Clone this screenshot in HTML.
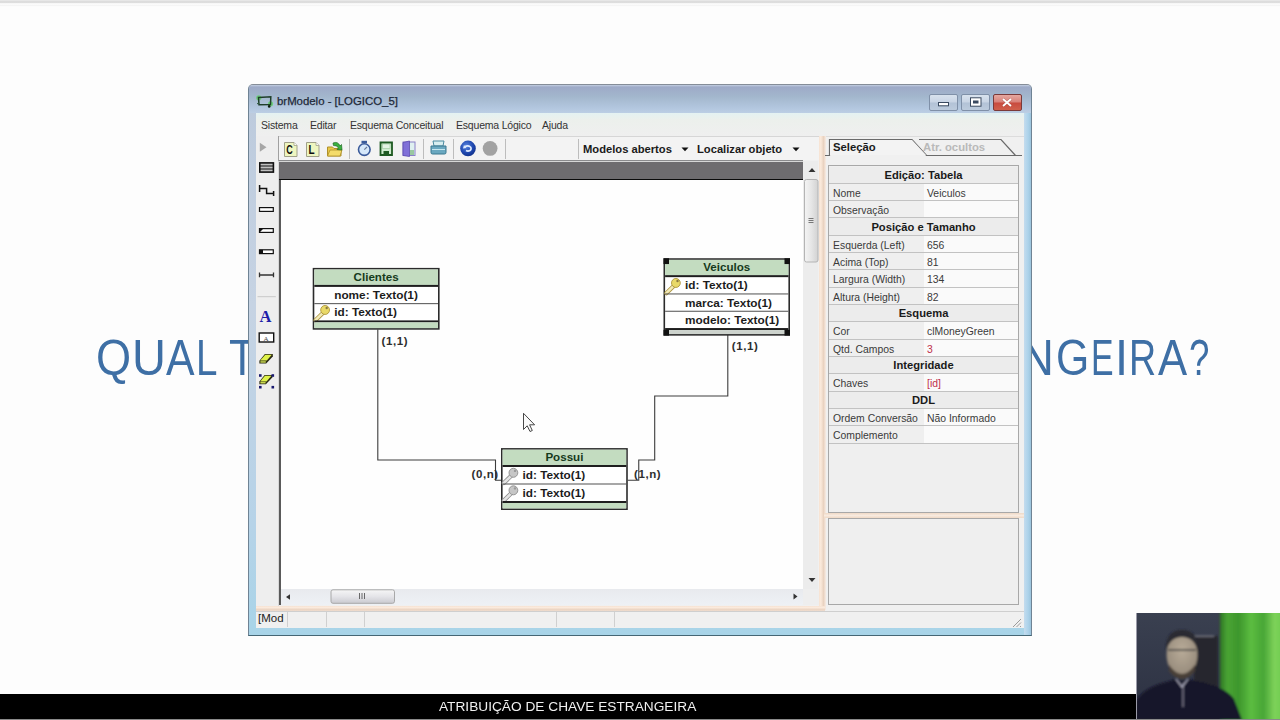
<!DOCTYPE html>
<html><head><meta charset="utf-8">
<style>
*{margin:0;padding:0;box-sizing:border-box}
html,body{width:1280px;height:720px;overflow:hidden;background:#fdfdfd;font-family:"Liberation Sans",sans-serif}
.a{position:absolute}
.nw{white-space:nowrap}
#topline{left:0;top:0;width:1280px;height:8px;background:linear-gradient(#ececec 0px,#d6d6d6 2.2px,#fefefe 3.8px,#f5f5f5 5.5px,#fefefe 6.8px,#fcfcfc 8px)}
.sl{position:absolute;color:#3e6fa5;font-size:50px;top:328.6px;white-space:nowrap;transform-origin:0 0}
#bar{left:0;top:694px;width:1280px;height:25px;background:#000}
#bar2{left:0;top:719px;width:1280px;height:1px;background:#8a8a8a}
#cap{left:439px;top:699px;color:#f0f0f0;font-size:13.7px;white-space:nowrap}
#cam{left:1136px;top:613px;width:144px;height:107px;background:#2a3040;overflow:hidden}
/* window */
#win{left:248px;top:84px;width:784px;height:552px;border:1px solid #6f8394;border-top-color:#858d98;border-bottom-color:#456674;border-radius:5px 5px 0 0;background:linear-gradient(#bccadc,#c6d3e3 40%,#b6d3e8 80%,#a8d4e8)}
#title{left:249px;top:85px;width:782px;height:28px;border-radius:4px 4px 0 0;background:linear-gradient(#c4d0e2 0px,#9eaac8 2px,#a2b6cc 40%,#b4c8e0 85%,#bccee4)}
#ttext{left:277px;top:95px;font-size:11.4px;color:#1d2838;-webkit-text-stroke:0.25px #1d2838;white-space:nowrap}
.wb{top:94px;width:29px;height:17px;border:1px solid #7f90a8;border-radius:2px;background:linear-gradient(#d8e2ee,#c8d4e4 48%,#b2c2d6 52%,#bccbdd)}
#client{left:256px;top:113px;width:768px;height:515px;background:#f0f0f0}
#menu{left:256px;top:113px;width:768px;height:23px;background:linear-gradient(#e4f2f2,#ecf0ec 30%,#efefef)}
.mi{position:absolute;top:119px;font-size:10.5px;letter-spacing:-0.2px;color:#333;white-space:nowrap}
#tb{left:279px;top:136px;width:541px;height:24px;background:#f3f3f3;border-top:1px solid #d6d6d6}
.sep{position:absolute;width:1px;height:20px;top:139px;background:#bdbdbd}
#strip{left:256px;top:136px;width:23px;height:470px;background:#eeeeee;border-right:1px solid #d8d8d8}
#band{left:279px;top:162px;width:524px;height:18px;background:#6e6c6f;border-bottom:1.2px solid #0a0a0a;box-shadow:0 -1px 0 #d6d6d6,0 -2px 0 #8a8a8c}
#canvas{left:279px;top:180px;width:525px;height:409px;background:#fefefe;border-left:2px solid #5a5a5a}
#vs{left:803px;top:161px;width:15px;height:428px;background:#ececec}
#hs{left:279px;top:589px;width:525px;height:16px;background:linear-gradient(#e8eaee,#eef1f5)}
#corner{left:803px;top:589px;width:16px;height:16px;background:#eeeeee}
#spv{left:819px;top:136px;width:6.5px;height:474px;background:linear-gradient(90deg,#f6e2d2,#fbeadc 25%,#e9d2c0 65%,#f8ece4)}
#sph{left:256px;top:605.5px;width:569px;height:6px;background:linear-gradient(#f6e2d2,#fbeadc 25%,#e9d2c0 65%,#f8ece4)}
#status{left:256px;top:611px;width:768px;height:17px;background:#f0f0f0;border-top:1px solid #cfcfcf}
.st{position:absolute;top:612px;width:1px;height:15px;background:#d0d0d0}
.tb{font-weight:bold;font-size:11.2px;color:#1a1a1a;white-space:nowrap;position:absolute}
/* entities */
.ent{position:absolute;border:2px solid #2a2a2a;background:#fff}
.eh{position:absolute;left:0;right:0;background:#c3dcc0;color:#15361a;font-weight:bold;font-size:11.5px;text-align:center}
.er{position:absolute;left:0;right:0;background:#fff;font-weight:bold;font-size:11.8px;color:#1a1a1a;white-space:nowrap}
.ln{position:absolute;background:#444}
.card{position:absolute;font-weight:bold;font-size:11px;color:#333;white-space:nowrap}
/* props */
#props{left:828px;top:165px;width:191px;height:348px;border:1px solid #a8a8a8;background:#efefef}
#props2{left:828px;top:518px;width:191px;height:87px;border:1px solid #a8a8a8;background:#efefef}
#sph2{left:824px;top:513px;width:200px;height:5px;background:linear-gradient(#efd9c6,#f8ebe0 50%,#efd9c6)}
.pr{position:absolute;left:829px;width:189px;height:17.33px;border-bottom:1px solid #c4c4c4}
.pl{position:absolute;left:833px;font-size:10.4px;color:#3a3a3a;white-space:nowrap}
.pv{position:absolute;left:927px;font-size:10.4px;color:#3a3a3a;white-space:nowrap}
.ph{position:absolute;left:829px;width:189px;text-align:center;font-size:11.2px;font-weight:bold;color:#1a1a1a;white-space:nowrap}
</style></head><body><div id="wrap" style="position:absolute;left:0;top:0;width:1280px;height:720px;filter:blur(0.35px)">
<div class="a" id="topline"></div>

<span class="sl" style="left:96.2px;transform:scaleX(0.902)">Q</span>
<span class="sl" style="left:131.6px;transform:scaleX(0.940)">U</span>
<span class="sl" style="left:165.6px;transform:scaleX(0.855)">A</span>
<span class="sl" style="left:196.1px;transform:scaleX(0.771)">L</span>
<span class="sl" style="left:228.5px;transform:scaleX(0.874)">T</span>
<span class="sl" style="left:1019.5px;transform:scaleX(0.940)">N</span>
<span class="sl" style="left:1055.6px;transform:scaleX(0.855)">G</span>
<span class="sl" style="left:1090.9px;transform:scaleX(0.677)">E</span>
<span class="sl" style="left:1115.0px;transform:scaleX(0.940)">I</span>
<span class="sl" style="left:1129.2px;transform:scaleX(0.752)">R</span>
<span class="sl" style="left:1157.6px;transform:scaleX(0.874)">A</span>
<span class="sl" style="left:1188.6px;transform:scaleX(0.733)">?</span>
<div class="a" id="bar"></div>
<div class="a" id="cap">ATRIBUIÇÃO DE CHAVE ESTRANGEIRA</div>
<div class="a" id="cam"></div>

<div class="a" id="win"></div>
<div class="a" id="title"></div>
<div class="a" id="ttext">brModelo - [LOGICO_5]</div>
<div class="a wb" style="left:929px"></div>
<div class="a wb" style="left:961px"></div>
<div class="a wb" style="left:993px;border-color:#7a3a3a;background:linear-gradient(#e6a8a0,#d88078 48%,#c84a3e 52%,#d0604c)"></div>
<div class="a" style="left:1024px;top:113px;width:7px;height:522px;background:linear-gradient(90deg,#c4dcee,#acd2ea 60%,#9cc4dc)"></div>
<div class="a" id="client"></div>
<div class="a" id="menu"></div>
<span class="mi" style="left:261px">Sistema</span>
<span class="mi" style="left:310px">Editar</span>
<span class="mi" style="left:350px">Esquema Conceitual</span>
<span class="mi" style="left:456px">Esquema Lógico</span>
<span class="mi" style="left:542px">Ajuda</span>
<div class="a" id="tb"></div>
<div class="a" style="left:825px;top:136px;width:199px;height:1px;background:#dcdcdc"></div>
<div class="sep" style="left:349px"></div>
<div class="sep" style="left:423px"></div>
<div class="sep" style="left:453px"></div>
<div class="sep" style="left:505px"></div>
<div class="sep" style="left:578px"></div>
<span class="tb" style="left:583px;top:143px">Modelos abertos</span>
<span class="tb" style="left:697px;top:143px">Localizar objeto</span>
<div class="a" id="strip"></div>
<div class="a" id="band"></div>
<div class="a" style="left:278px;top:136px;width:1px;height:25px;background:#a0a0a0"></div>
<div class="a" id="canvas"></div>
<div class="a" id="vs"></div>
<div class="a" id="hs"></div>
<div class="a" id="corner"></div>
<div class="a" style="left:279px;top:180px;width:2px;height:425px;background:#5a5a5a"></div>
<div class="a" id="spv"></div>
<div class="a" id="sph"></div>
<div class="a" id="status"></div>

<!-- right panel -->
<div class="a" id="props"></div>
<div class="a" id="sph2"></div>
<div class="a" id="props2"></div>
<div class="a" style="left:829px;top:166.50px;width:189px;height:16.33px;background:#ececec"></div>
<div class="ph" style="top:168.70px">Edição: Tabela</div>
<div class="a" style="left:829px;top:182.83px;width:189px;height:1px;background:#c2c2c2"></div>
<div class="a" style="left:829px;top:183.83px;width:95px;height:16.33px;background:#efefef"></div>
<div class="a" style="left:924px;top:183.83px;width:94px;height:16.33px;background:#fafafa"></div>
<div class="pl" style="top:187.63px">Nome</div>
<div class="pv" style="top:187.63px">Veiculos</div>
<div class="a" style="left:829px;top:200.16px;width:189px;height:1px;background:#c2c2c2"></div>
<div class="a" style="left:829px;top:201.16px;width:95px;height:16.33px;background:#efefef"></div>
<div class="a" style="left:924px;top:201.16px;width:94px;height:16.33px;background:#fafafa"></div>
<div class="pl" style="top:204.96px">Observação</div>
<div class="a" style="left:829px;top:217.49px;width:189px;height:1px;background:#c2c2c2"></div>
<div class="a" style="left:829px;top:218.49px;width:189px;height:16.33px;background:#ececec"></div>
<div class="ph" style="top:220.69px">Posição e Tamanho</div>
<div class="a" style="left:829px;top:234.82px;width:189px;height:1px;background:#c2c2c2"></div>
<div class="a" style="left:829px;top:235.82px;width:95px;height:16.33px;background:#efefef"></div>
<div class="a" style="left:924px;top:235.82px;width:94px;height:16.33px;background:#fafafa"></div>
<div class="pl" style="top:239.62px">Esquerda (Left)</div>
<div class="pv" style="top:239.62px">656</div>
<div class="a" style="left:829px;top:252.15px;width:189px;height:1px;background:#c2c2c2"></div>
<div class="a" style="left:829px;top:253.15px;width:95px;height:16.33px;background:#efefef"></div>
<div class="a" style="left:924px;top:253.15px;width:94px;height:16.33px;background:#fafafa"></div>
<div class="pl" style="top:256.95px">Acima (Top)</div>
<div class="pv" style="top:256.95px">81</div>
<div class="a" style="left:829px;top:269.48px;width:189px;height:1px;background:#c2c2c2"></div>
<div class="a" style="left:829px;top:270.48px;width:95px;height:16.33px;background:#efefef"></div>
<div class="a" style="left:924px;top:270.48px;width:94px;height:16.33px;background:#fafafa"></div>
<div class="pl" style="top:274.28px">Largura (Width)</div>
<div class="pv" style="top:274.28px">134</div>
<div class="a" style="left:829px;top:286.81px;width:189px;height:1px;background:#c2c2c2"></div>
<div class="a" style="left:829px;top:287.81px;width:95px;height:16.33px;background:#efefef"></div>
<div class="a" style="left:924px;top:287.81px;width:94px;height:16.33px;background:#fafafa"></div>
<div class="pl" style="top:291.61px">Altura (Height)</div>
<div class="pv" style="top:291.61px">82</div>
<div class="a" style="left:829px;top:304.14px;width:189px;height:1px;background:#c2c2c2"></div>
<div class="a" style="left:829px;top:305.14px;width:189px;height:16.33px;background:#ececec"></div>
<div class="ph" style="top:307.34px">Esquema</div>
<div class="a" style="left:829px;top:321.47px;width:189px;height:1px;background:#c2c2c2"></div>
<div class="a" style="left:829px;top:322.47px;width:95px;height:16.33px;background:#efefef"></div>
<div class="a" style="left:924px;top:322.47px;width:94px;height:16.33px;background:#fafafa"></div>
<div class="pl" style="top:326.27px">Cor</div>
<div class="pv" style="top:326.27px">clMoneyGreen</div>
<div class="a" style="left:829px;top:338.80px;width:189px;height:1px;background:#c2c2c2"></div>
<div class="a" style="left:829px;top:339.80px;width:95px;height:16.33px;background:#efefef"></div>
<div class="a" style="left:924px;top:339.80px;width:94px;height:16.33px;background:#fafafa"></div>
<div class="pl" style="top:343.60px">Qtd. Campos</div>
<div class="pv" style="top:343.60px"><span style="color:#c0304a">3</span></div>
<div class="a" style="left:829px;top:356.13px;width:189px;height:1px;background:#c2c2c2"></div>
<div class="a" style="left:829px;top:357.13px;width:189px;height:16.33px;background:#ececec"></div>
<div class="ph" style="top:359.33px">Integridade</div>
<div class="a" style="left:829px;top:373.46px;width:189px;height:1px;background:#c2c2c2"></div>
<div class="a" style="left:829px;top:374.46px;width:95px;height:16.33px;background:#efefef"></div>
<div class="a" style="left:924px;top:374.46px;width:94px;height:16.33px;background:#fafafa"></div>
<div class="pl" style="top:378.26px">Chaves</div>
<div class="pv" style="top:378.26px"><span style="color:#c0304a">[id]</span></div>
<div class="a" style="left:829px;top:390.79px;width:189px;height:1px;background:#c2c2c2"></div>
<div class="a" style="left:829px;top:391.79px;width:189px;height:16.33px;background:#ececec"></div>
<div class="ph" style="top:393.99px">DDL</div>
<div class="a" style="left:829px;top:408.12px;width:189px;height:1px;background:#c2c2c2"></div>
<div class="a" style="left:829px;top:409.12px;width:95px;height:16.33px;background:#efefef"></div>
<div class="a" style="left:924px;top:409.12px;width:94px;height:16.33px;background:#fafafa"></div>
<div class="pl" style="top:412.92px">Ordem Conversão</div>
<div class="pv" style="top:412.92px">Não Informado</div>
<div class="a" style="left:829px;top:425.45px;width:189px;height:1px;background:#c2c2c2"></div>
<div class="a" style="left:829px;top:426.45px;width:95px;height:16.33px;background:#efefef"></div>
<div class="a" style="left:924px;top:426.45px;width:94px;height:16.33px;background:#fafafa"></div>
<div class="pl" style="top:430.25px">Complemento</div>
<div class="a" style="left:829px;top:442.78px;width:189px;height:1px;background:#c2c2c2"></div>
<svg class="a" style="left:820px;top:136px" width="204" height="28" viewBox="820 136 204 28">
<path d="M825 155.5 H829.5 V139.5 H912 L926.5 155.5 H1022" fill="none" stroke="#6a6a6a" stroke-width="1.2"/>
<path d="M919 139.5 H1001 L1015.5 155.5" fill="none" stroke="#6a6a6a" stroke-width="1.2"/>
<path d="M830 140 H912 L926 155 H830 Z" fill="#f3f3f3"/>
</svg>
<span class="tb" style="left:833px;top:141px;font-size:11.3px">Seleção</span>
<span class="tb" style="left:923px;top:141px;font-size:11.3px;color:#b9b9b9">Atr. ocultos</span>

<svg class="a" style="left:0;top:0" width="1280" height="720" viewBox="0 0 1280 720">
<defs>
<linearGradient id="gdoc" x1="0" y1="0" x2="1" y2="1"><stop offset="0" stop-color="#f8f8d0"/><stop offset="1" stop-color="#e8f0a8"/></linearGradient>
<radialGradient id="gblue" cx="0.4" cy="0.35" r="0.7"><stop offset="0" stop-color="#5a86e0"/><stop offset="0.6" stop-color="#1f48b0"/><stop offset="1" stop-color="#10308a"/></radialGradient>
</defs>
<!-- title icon -->
<circle cx="258.8" cy="97.8" r="2.6" fill="#5ad060" opacity="0.75"/>
<circle cx="270.5" cy="103.8" r="2.6" fill="#5ad060" opacity="0.75"/>
<path d="M258.5 97.5 L270.8 96.8 L270.5 104.5 L259 104.8 Z" fill="none" stroke="#1f3f2a" stroke-width="1.5"/>
<path d="M257 104 l2 -1.5" stroke="#2a5a3a" stroke-width="1"/>
<circle cx="269.2" cy="106.4" r="1.3" fill="#102010"/>
<!-- window button glyphs -->
<rect x="938.5" y="102.5" width="10" height="3.3" fill="#fff" stroke="#3a4a60" stroke-width="1"/>
<rect x="970.5" y="97.8" width="10.5" height="8.4" fill="#fff" stroke="#3a4a60" stroke-width="1"/>
<rect x="973" y="100.5" width="5.5" height="3" fill="#3a4a60"/>
<path d="M1003 99 L1011 106 M1011 99 L1003 106" stroke="#8a3a34" stroke-width="2.8" opacity="0.5"/>
<path d="M1003 99 L1011 106 M1011 99 L1003 106" stroke="#fff" stroke-width="1.9"/>
<!-- toolbar: C and L docs -->
<path d="M284.5 142.5 H294 L297 145.5 V156.5 H284.5 Z" fill="#eef6c0" stroke="#a0a088" stroke-width="1"/>
<path d="M294 142.5 V145.5 H297" fill="#fff" stroke="#a0a088" stroke-width="0.8"/>
<text transform="translate(286.2 154.2) scale(0.72 1)" font-family="Liberation Sans" font-weight="bold" font-size="12.5" fill="#0e0e0e">C</text>
<path d="M306.5 142.5 H316 L319 145.5 V156.5 H306.5 Z" fill="#eef6c0" stroke="#a0a088" stroke-width="1"/>
<path d="M316 142.5 V145.5 H319" fill="#fff" stroke="#a0a088" stroke-width="0.8"/>
<text transform="translate(308.6 154.2) scale(0.8 1)" font-family="Liberation Sans" font-weight="bold" font-size="12.5" fill="#0e0e0e">L</text>
<!-- folder -->
<path d="M327.5 147 h5 l1.5 1.5 h7 v7.5 h-13.5 z" fill="#e8c84a" stroke="#b0902a" stroke-width="1"/>
<path d="M327.5 156 l2.5 -6 h12 l-2 6 z" fill="#f4dc6a" stroke="#b0902a" stroke-width="0.8"/>
<path d="M333 143 q5 -2 7 3 l1.5 -1.5 l0.5 5.5 l-5 -0.5 l1.5 -1.5 q-1.5 -3 -5 -2.5 z" fill="#3ab040" stroke="#1e6a22" stroke-width="0.7"/>
<!-- stopwatch -->
<rect x="361.5" y="140.8" width="5.5" height="2.5" fill="#3a5a9a"/>
<circle cx="364.3" cy="149.6" r="5.8" fill="#d6e8fa" stroke="#3a5a9a" stroke-width="1.6"/>
<path d="M364.3 149.6 L367 147" stroke="#6a7a9a" stroke-width="1.2"/>
<!-- floppy -->
<path d="M380.5 142.5 h11.5 v12.5 h-11.5 z" fill="#cfeccf" stroke="#1e5a22" stroke-width="1.8"/>
<rect x="382.5" y="144" width="7.5" height="4.5" fill="#e4f4e4" stroke="#9ac89a" stroke-width="0.6"/>
<rect x="383.5" y="151" width="5.5" height="4" fill="#1e5a22"/>
<!-- door -->
<rect x="403" y="142" width="12" height="13.5" fill="#dff0f0" stroke="#8a80c8" stroke-width="1"/>
<path d="M403 142.5 L409.5 141 V156.5 L403 155.5 Z" fill="#8070d8" stroke="#5a4ab0" stroke-width="0.8"/>
<rect x="410" y="150" width="4" height="5" fill="#9ac8a0"/>
<!-- printer -->
<path d="M433 141 h11 l-1 5 h-9 z" fill="#d8eef0" stroke="#4a8aa0" stroke-width="1"/>
<path d="M431 146 h15 v6.5 q0 1.5 -1.5 1.5 h-12 q-1.5 0 -1.5 -1.5 z" fill="#6aa8c0" stroke="#3a7890" stroke-width="1"/>
<path d="M432 149.5 h13" stroke="#c8e8f0" stroke-width="1"/>
<!-- blue circle -->
<circle cx="468" cy="148.4" r="7.8" fill="url(#gblue)"/>
<path d="M465 146.5 q3 -1.5 5.5 0.5 q1.5 2 -0.5 3.5 q-2 1.2 -4 0" fill="none" stroke="#e0ecff" stroke-width="1.6"/>
<path d="M464 145 l2.5 3 l-3.5 0.5 z" fill="#e0ecff"/>
<!-- gray circle -->
<circle cx="490.1" cy="148.4" r="7.4" fill="#a2a2a2"/>
<!-- dropdown arrows -->
<path d="M681.5 147.5 h7 l-3.5 3.8 z" fill="#111"/>
<path d="M792.5 147.5 h7 l-3.5 3.8 z" fill="#111"/>
<!-- left strip -->
<path d="M259.8 142.7 L266.5 147.2 L259.8 151.8 Z" fill="#a6a6a6"/>
<rect x="259.8" y="162.9" width="13.6" height="9.2" fill="#c0c0c0" stroke="#111" stroke-width="1.6"/>
<path d="M259.8 166 h13.6 M259.8 169 h13.6" stroke="#111" stroke-width="1.1"/>
<path d="M259.6 185 v7 M259.6 188.5 h7 v5 h7 M273.6 191 v5" fill="none" stroke="#111" stroke-width="1.5"/>
<rect x="259.5" y="207.6" width="13.8" height="3.8" fill="#fff" stroke="#111" stroke-width="1.2"/>
<rect x="259.5" y="228.6" width="13.8" height="3.8" fill="#fff" stroke="#111" stroke-width="1.2"/>
<path d="M259.5 228.6 h4 l-4 3.8 z" fill="#111"/>
<rect x="259.5" y="249.8" width="13.8" height="3.8" fill="#fff" stroke="#111" stroke-width="1.2"/>
<rect x="259.5" y="249.8" width="3.5" height="3.8" fill="#111"/>
<path d="M259.5 272.6 v4.7 M273.5 272.6 v4.7 M259.5 275 h14" fill="none" stroke="#333" stroke-width="1.3"/>
<path d="M257.5 296.7 h18.3" stroke="#c8c8c8" stroke-width="1"/>
<text x="259.6" y="322" font-family="Liberation Serif" font-weight="bold" font-size="16.5" fill="#1e20a8">A</text>
<rect x="259.2" y="333" width="14.5" height="9" fill="#fff" stroke="#111" stroke-width="1.4"/>
<text x="263.5" y="340.5" font-family="Liberation Serif" font-size="7" fill="#444">A</text>
<path d="M259.4 360.8 L264.9 354.1 H272.8 V356.6 L266.2 363.6 H259.4 Z" fill="#2a2a14"/>
<path d="M260.2 360.6 L265.3 354.7 H271.8 L266.8 360.6 Z" fill="#dff24a"/>
<rect x="260.4" y="361.2" width="5.4" height="1.5" fill="#c8d850"/>
<path d="M259.4 381.6 L264.6 375.1 H272.3 V377.6 L265.9 384.2 H259.4 Z" fill="#2a2a14"/>
<path d="M260.2 381.4 L265 375.7 H271.4 L266.6 381.4 Z" fill="#dff24a"/>
<rect x="260.4" y="382" width="5.2" height="1.5" fill="#c8d850"/>
<rect x="259" y="374.2" width="2.6" height="2.6" fill="#1a1a70"/>
<rect x="271.5" y="374.2" width="2.6" height="2.6" fill="#1a1a70"/>
<rect x="259" y="385.9" width="2.6" height="2.6" fill="#1a1a70"/>
<rect x="271.5" y="385.9" width="2.6" height="2.6" fill="#1a1a70"/>
</svg>

<svg class="a" style="left:0;top:0" width="1280" height="720" viewBox="0 0 1280 720">
<path d="M377.8 329.5 V460 H495.5 V480.3 H501.25" fill="none" stroke="#3c3c3c" stroke-width="1.1"/>
<path d="M727.8 335 V396 H654.7 V460 H638.75 V480.3 H627.8" fill="none" stroke="#3c3c3c" stroke-width="1.1"/>
<rect x="313.5" y="268.7" width="125.30000000000004" height="60.20000000000001" fill="#fff" stroke="#2b2b2b" stroke-width="1.6"/>
<rect x="314.3" y="269.5" width="123.70000000000003" height="15.4" fill="#c3dcc0"/>
<rect x="314.3" y="284.9" width="123.70000000000003" height="2" fill="#1e1e1e"/>
<text x="376.15" y="280.5" text-anchor="middle" font-family="Liberation Sans" font-weight="bold" font-size="11.6" fill="#163a1c">Clientes</text>
<text x="334.2" y="299.2" font-family="Liberation Sans" font-weight="bold" font-size="11.8" fill="#1c1c1c">nome: Texto(1)</text>
<rect x="314.3" y="303.15" width="123.70000000000003" height="1" fill="#505050"/>
<text x="334.2" y="316.45" font-family="Liberation Sans" font-weight="bold" font-size="11.8" fill="#1c1c1c">id: Texto(1)</text>
<g transform="translate(312.7,304.15)"><path d="M10.5 8.5 L2.8 16" stroke="#ae9640" stroke-width="4.2" stroke-linecap="round"/><path d="M10.5 8.5 L2.8 16" stroke="#f2eab8" stroke-width="2.6" stroke-linecap="round"/><ellipse cx="12.4" cy="5.8" rx="4.4" ry="4.5" fill="#e9d968" stroke="#ae9640" stroke-width="0.9"/><circle cx="14" cy="3.9" r="1.2" fill="#8a7a40"/></g>
<rect x="314.3" y="320.4" width="123.70000000000003" height="2" fill="#1e1e1e"/>
<rect x="314.3" y="322.4" width="123.70000000000003" height="5.7" fill="#c3dcc0"/>
<rect x="664.3" y="259.05" width="124.9" height="75.79999999999998" fill="#fff" stroke="#2b2b2b" stroke-width="1.6"/>
<rect x="665.1" y="259.85" width="123.3" height="15.299999999999999" fill="#c3dcc0"/>
<rect x="665.1" y="275.15" width="123.3" height="2" fill="#1e1e1e"/>
<text x="726.75" y="270.85" text-anchor="middle" font-family="Liberation Sans" font-weight="bold" font-size="11.6" fill="#163a1c">Veiculos</text>
<text x="685.0" y="289.45" font-family="Liberation Sans" font-weight="bold" font-size="11.8" fill="#1c1c1c">id: Texto(1)</text>
<g transform="translate(663.5,277.15)"><path d="M10.5 8.5 L2.8 16" stroke="#ae9640" stroke-width="4.2" stroke-linecap="round"/><path d="M10.5 8.5 L2.8 16" stroke="#f2eab8" stroke-width="2.6" stroke-linecap="round"/><ellipse cx="12.4" cy="5.8" rx="4.4" ry="4.5" fill="#e9d968" stroke="#ae9640" stroke-width="0.9"/><circle cx="14" cy="3.9" r="1.2" fill="#8a7a40"/></g>
<rect x="665.1" y="293.45" width="123.3" height="1" fill="#505050"/>
<text x="685.0" y="306.75" font-family="Liberation Sans" font-weight="bold" font-size="11.8" fill="#1c1c1c">marca: Texto(1)</text>
<rect x="665.1" y="310.75" width="123.3" height="1" fill="#505050"/>
<text x="685.0" y="324.05" font-family="Liberation Sans" font-weight="bold" font-size="11.8" fill="#1c1c1c">modelo: Texto(1)</text>
<rect x="665.1" y="328.04999999999995" width="123.3" height="2" fill="#1e1e1e"/>
<rect x="665.1" y="330.04999999999995" width="123.3" height="4.0" fill="#cdd3cd"/>
<rect x="663.5" y="258.25" width="5.5" height="5.8" fill="#111"/>
<rect x="784.5" y="258.25" width="5.5" height="5.8" fill="#111"/>
<rect x="663.5" y="329.84999999999997" width="5.5" height="5.8" fill="#111"/>
<rect x="784.5" y="329.84999999999997" width="5.5" height="5.8" fill="#111"/>
<rect x="501.8" y="448.90000000000003" width="125.19999999999996" height="60.299999999999976" fill="#fff" stroke="#2b2b2b" stroke-width="1.6"/>
<rect x="502.6" y="449.70000000000005" width="123.59999999999995" height="15.299999999999999" fill="#c3dcc0"/>
<rect x="502.6" y="465.0" width="123.59999999999995" height="2" fill="#1e1e1e"/>
<text x="564.4" y="460.70000000000005" text-anchor="middle" font-family="Liberation Sans" font-weight="bold" font-size="11.6" fill="#163a1c">Possui</text>
<text x="522.5" y="479.3" font-family="Liberation Sans" font-weight="bold" font-size="11.8" fill="#1c1c1c">id: Texto(1)</text>
<g transform="translate(501.0,467.0)"><path d="M10.5 8.5 L2.8 16" stroke="#8e8e8e" stroke-width="4.2" stroke-linecap="round"/><path d="M10.5 8.5 L2.8 16" stroke="#e4e4e4" stroke-width="2.6" stroke-linecap="round"/><ellipse cx="12.4" cy="5.8" rx="4.4" ry="4.5" fill="#c6c6c6" stroke="#8e8e8e" stroke-width="0.9"/><circle cx="14" cy="3.9" r="1.2" fill="#9a9a9a"/></g>
<rect x="502.6" y="483.5" width="123.59999999999995" height="1" fill="#505050"/>
<text x="522.5" y="496.8" font-family="Liberation Sans" font-weight="bold" font-size="11.8" fill="#1c1c1c">id: Texto(1)</text>
<g transform="translate(501.0,484.5)"><path d="M10.5 8.5 L2.8 16" stroke="#8e8e8e" stroke-width="4.2" stroke-linecap="round"/><path d="M10.5 8.5 L2.8 16" stroke="#e4e4e4" stroke-width="2.6" stroke-linecap="round"/><ellipse cx="12.4" cy="5.8" rx="4.4" ry="4.5" fill="#c6c6c6" stroke="#8e8e8e" stroke-width="0.9"/><circle cx="14" cy="3.9" r="1.2" fill="#9a9a9a"/></g>
<rect x="502.6" y="501.0" width="123.59999999999995" height="2" fill="#1e1e1e"/>
<rect x="502.6" y="503.0" width="123.59999999999995" height="5.4" fill="#c3dcc0"/>
<text x="381.5" y="344.6" font-family="Liberation Sans" font-weight="bold" font-size="11.5" letter-spacing="0.6" fill="#2e2e2e">(1,1)</text>
<text x="731.8" y="350.4" font-family="Liberation Sans" font-weight="bold" font-size="11.5" letter-spacing="0.6" fill="#2e2e2e">(1,1)</text>
<text x="471.5" y="478.2" font-family="Liberation Sans" font-weight="bold" font-size="11.5" letter-spacing="0.6" fill="#2e2e2e">(0,n)</text>
<text x="634" y="478.2" font-family="Liberation Sans" font-weight="bold" font-size="11.5" letter-spacing="0.6" fill="#2e2e2e">(1,n)</text>
<path d="M523.5 413.3 V429.5 L527.2 425.8 L530 431.5 L532.3 430.5 L529.6 424.8 L534.6 424.8 Z" fill="#fafafa" stroke="#333" stroke-width="0.9"/>
</svg>
<!-- vertical scrollbar -->
<svg class="a" style="left:0;top:0" width="1280" height="720" viewBox="0 0 1280 720">
<defs>
<linearGradient id="vth" x1="0" y1="0" x2="1" y2="0"><stop offset="0" stop-color="#f4f4f4"/><stop offset="0.5" stop-color="#e6e6e6"/><stop offset="1" stop-color="#d2d2d2"/></linearGradient>
<linearGradient id="hth" x1="0" y1="0" x2="0" y2="1"><stop offset="0" stop-color="#f6f6f6"/><stop offset="0.5" stop-color="#e4e4e8"/><stop offset="1" stop-color="#cacad0"/></linearGradient>
</defs>
<path d="M808.5 172 L812 168 L815.5 172 Z" fill="#333"/>
<rect x="804.5" y="179.5" width="13.5" height="82.5" rx="2" fill="url(#vth)" stroke="#b4b4b4" stroke-width="1"/>
<path d="M808.5 218.5 h5 M808.5 220.5 h5 M808.5 222.5 h5" stroke="#6a6a6a" stroke-width="0.9"/>
<path d="M808.5 578 L815.5 578 L812 582 Z" fill="#333"/>
<!-- horizontal scrollbar -->
<path d="M290 594.2 L290 599.7 L286 597 Z" fill="#333"/>
<rect x="331" y="589.8" width="63.5" height="13.5" rx="2" fill="url(#hth)" stroke="#a8a8a8" stroke-width="1"/>
<path d="M359.5 593 v6 M362 593 v6 M364.5 593 v6" stroke="#5a5a5a" stroke-width="0.9"/>
<path d="M793.5 593.5 L793.5 599.5 L797.5 596.5 Z" fill="#333"/>
<!-- resize grip -->
<path d="M1013 627 L1021 619 M1016.5 627 L1021 622.5 M1020 627 L1021 626" stroke="#9a9a9a" stroke-width="1"/>
</svg>
<div class="st" style="left:287px"></div>
<div class="st" style="left:326px"></div>
<div class="st" style="left:364px"></div>
<div class="st" style="left:556px"></div>
<div class="st" style="left:614px"></div>
<span class="a nw" style="left:258px;top:612px;font-size:11.5px;color:#222">[Mod</span>

<svg class="a" style="left:1136px;top:613px" width="144" height="106" viewBox="0 0 144 106">
<defs>
<linearGradient id="cg" x1="0" y1="0" x2="1" y2="0">
<stop offset="0" stop-color="#2f7524"/><stop offset="0.12" stop-color="#4aa434"/><stop offset="0.3" stop-color="#3d962c"/><stop offset="0.5" stop-color="#5cbd40"/><stop offset="0.7" stop-color="#48a636"/><stop offset="0.88" stop-color="#7ed25a"/><stop offset="1" stop-color="#70cc50"/>
</linearGradient>
<linearGradient id="bg" x1="0" y1="0" x2="0" y2="1"><stop offset="0" stop-color="#3a4050"/><stop offset="1" stop-color="#2c3142"/></linearGradient>
<radialGradient id="face" cx="0.5" cy="0.4" r="0.6"><stop offset="0" stop-color="#b8ab98"/><stop offset="0.8" stop-color="#9c9080"/><stop offset="1" stop-color="#807464"/></radialGradient>
<filter id="bl" x="-10%" y="-10%" width="120%" height="120%"><feGaussianBlur stdDeviation="1.3"/></filter>
</defs>
<rect x="0" y="0" width="144" height="107" fill="url(#bg)"/>
<g filter="url(#bl)">
<rect x="84" y="-2" width="62" height="111" fill="url(#cg)"/>
<rect x="58" y="23" width="24" height="55" fill="#26272e"/>
<rect x="58" y="22.5" width="20" height="1.3" fill="#7a7a84"/>
<ellipse cx="46" cy="42" rx="15.5" ry="22" fill="url(#face)"/>
<path d="M30 38 Q29 17 46 17 Q63 17 62 38 Q58 24 46 24 Q34 24 30 38 Z" fill="#2a2a30"/>
<path d="M33 52 Q46 70 59 52 L59 58 Q46 74 33 58 Z" fill="#4a4038"/>
<path d="M32 37 h28" stroke="#3a3a3a" stroke-width="1.4"/>
<path d="M0 107 V88 Q8 74 34 68 L40 66 Q46 70 52 66 L60 68 Q90 74 98 86 L106 107 Z" fill="#141229"/>
<path d="M40 66 L46 74 L52 66" fill="none" stroke="#c8c8d8" stroke-width="1.1"/>
<path d="M47 70 V94" stroke="#a8a8b8" stroke-width="1"/>
</g>
<rect x="0" y="0" width="1" height="107" fill="#9a9aa8"/>
</svg>

<div class="a" id="bar2"></div>
</div></body></html>
